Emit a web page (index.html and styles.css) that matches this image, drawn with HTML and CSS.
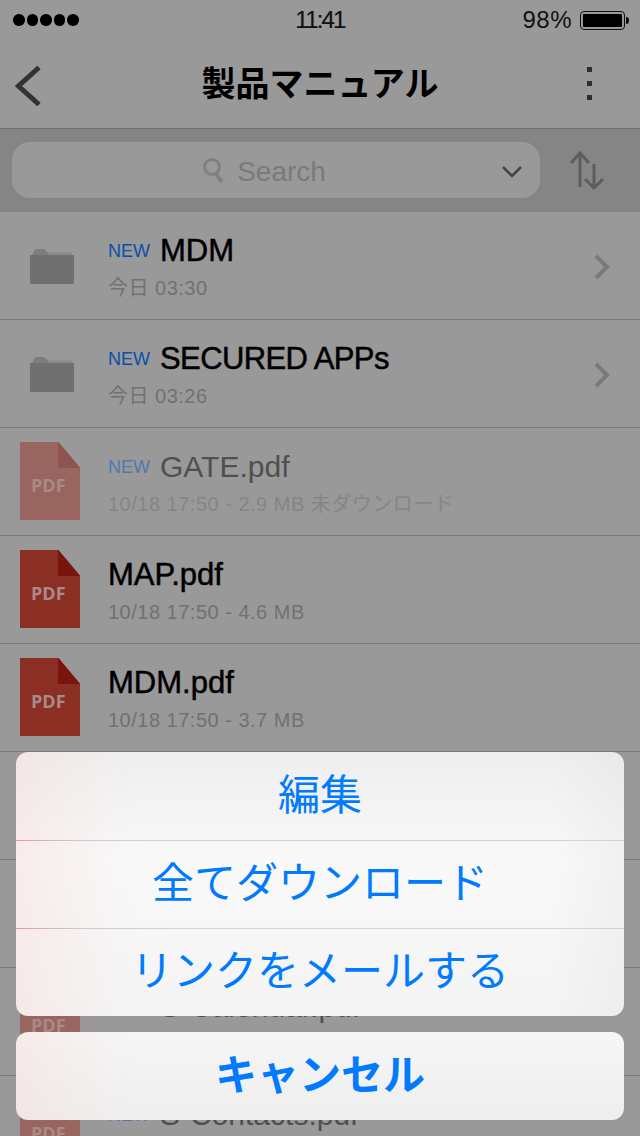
FILE: index.html
```html
<!DOCTYPE html>
<html lang="ja">
<head>
    <meta charset="UTF-8">
    <meta name="viewport" content="width=device-width, initial-scale=1.0">
    <title>製品マニュアル</title>
    <link rel="stylesheet" href="styles.css">
</head>
<body>
    <div class="status-bar">
        <div class="signal"><i></i><i></i><i></i><i></i><i></i></div>
        <div class="clock">11:41</div>
        <div class="power">
            <span class="percent">98%</span>
            <span class="battery"><span class="battery-fill"></span></span>
            <span class="battery-nub"></span>
        </div>
    </div>

    <header class="nav-bar">
        <svg class="back-icon" width="26" height="40" viewBox="0 0 26 40"><path d="M24 1.500 L3.500 20 L24 38.500" fill="none" stroke="#333" stroke-width="5"/></svg>
        <h1 class="nav-title">製品マニュアル</h1>
        <div class="kebab"><i></i><i></i><i></i></div>
    </header>

    <div class="search-strip">
        <div class="search-field">
            <svg class="search-icon" width="22" height="26" viewBox="0 0 22 26"><circle cx="10" cy="10" r="7.500" fill="none" stroke="#808080" stroke-width="3"/><path d="M14 17 L20 25" stroke="#808080" stroke-width="4"/></svg>
            <span class="search-text">Search</span>
            <svg class="search-caret" width="20" height="12" viewBox="0 0 20 12"><path d="M1 1 L10 10 L19 1" fill="none" stroke="#444" stroke-width="2.500"/></svg>
        </div>
        <svg class="sort-icon" width="36" height="40" viewBox="0 0 36 40"><path d="M11 37 V3 M2 13 L11 3 L20 13 M25 14 V38 M16 29 L25 38 L34 29" fill="none" stroke="#5d5d5d" stroke-width="3"/></svg>
    </div>

    <ul class="file-list">
        <li class="row">
            <div class="thumb"><div class="folder"><span class="folder-tab"></span><span class="folder-body"></span></div></div>
            <div class="info">
                <div class="name-line"><span class="new-tag">NEW</span><span class="name">MDM</span></div>
                <div class="meta">今日 03:30</div>
            </div>
            <svg class="row-arrow" width="18" height="26" viewBox="0 0 18 26"><path d="M3 2 L14 13 L3 24" fill="none" stroke="#7a7a7a" stroke-width="4"/></svg>
        </li>
        <li class="row">
            <div class="thumb"><div class="folder"><span class="folder-tab"></span><span class="folder-body"></span></div></div>
            <div class="info">
                <div class="name-line"><span class="new-tag">NEW</span><span class="name name-tight">SECURED APPs</span></div>
                <div class="meta">今日 03:26</div>
            </div>
            <svg class="row-arrow" width="18" height="26" viewBox="0 0 18 26"><path d="M3 2 L14 13 L3 24" fill="none" stroke="#7a7a7a" stroke-width="4"/></svg>
        </li>
        <li class="row remote">
            <div class="thumb"><div class="pdf"><span class="pdf-fold"></span><span class="pdf-label">PDF</span></div></div>
            <div class="info">
                <div class="name-line"><span class="new-tag">NEW</span><span class="name">GATE.pdf</span></div>
                <div class="meta">10/18 17:50 - 2.9 MB 未ダウンロード</div>
            </div>
        </li>
        <li class="row">
            <div class="thumb"><div class="pdf"><span class="pdf-fold"></span><span class="pdf-label">PDF</span></div></div>
            <div class="info">
                <div class="name-line"><span class="name">MAP.pdf</span></div>
                <div class="meta">10/18 17:50 - 4.6 MB</div>
            </div>
        </li>
        <li class="row">
            <div class="thumb"><div class="pdf"><span class="pdf-fold"></span><span class="pdf-label">PDF</span></div></div>
            <div class="info">
                <div class="name-line"><span class="name">MDM.pdf</span></div>
                <div class="meta">10/18 17:50 - 3.7 MB</div>
            </div>
        </li>
        <li class="row remote"></li>
        <li class="row remote"></li>
        <li class="row remote">
            <div class="thumb"><div class="pdf"><span class="pdf-fold"></span><span class="pdf-label">PDF</span></div></div>
            <div class="info">
                <div class="name-line"><span class="new-tag">NEW</span><span class="name">S-Calendar.pdf</span></div>
            </div>
        </li>
        <li class="row remote">
            <div class="thumb"><div class="pdf"><span class="pdf-fold"></span><span class="pdf-label">PDF</span></div></div>
            <div class="info">
                <div class="name-line"><span class="new-tag">NEW</span><span class="name">S-Contacts.pdf</span></div>
            </div>
        </li>
    </ul>

    <div class="action-sheet">
        <div class="sheet-group">
            <button class="sheet-btn">編集</button>
            <button class="sheet-btn">全てダウンロード</button>
            <button class="sheet-btn">リンクをメールする</button>
        </div>
        <div class="sheet-group cancel-group">
            <button class="sheet-btn cancel-btn">キャンセル</button>
        </div>
    </div>
</body>
</html>
```

FILE: styles.css
```css
* {
    margin: 0;
    padding: 0;
    box-sizing: border-box;
}

body {
    width: 640px;
    height: 1136px;
    background: #999;
    font-family: "Liberation Sans", "Noto Sans CJK JP", sans-serif;
    overflow: hidden;
    position: relative;
}

/* status bar */
.status-bar {
    height: 40px;
    padding: 0 11px 0 13px;
    display: flex;
    align-items: center;
    justify-content: space-between;
    position: relative;
    color: #111;
}

.signal {
    display: flex;
    gap: 2px;
}

.signal i {
    width: 11.500px;
    height: 11.500px;
    border-radius: 50%;
    background: #000;
}

.clock {
    position: absolute;
    left: 0;
    right: 0;
    text-align: center;
    font-size: 24px;
    letter-spacing: -1.8px;
    -webkit-text-stroke: 0.2px #111;
}

.power {
    display: flex;
    align-items: center;
}

.percent {
    font-size: 24px;
    letter-spacing: 0.5px;
    margin-right: 8px;
}

.battery {
    width: 45px;
    height: 19px;
    border: 1px solid #111;
    border-radius: 4px;
    padding: 2px;
    display: block;
}

.battery-fill {
    display: block;
    height: 100%;
    background: #000;
    border-radius: 1px;
}

.battery-nub {
    width: 3px;
    height: 7px;
    margin-left: 1px;
    background: #111;
    border-radius: 0 3px 3px 0;
}

/* nav */
.nav-bar {
    height: 89px;
    padding-bottom: 5px;
    display: flex;
    align-items: center;
    justify-content: space-between;
    border-bottom: 1px solid #6e6e6e;
    position: relative;
}

.back-icon {
    margin: 8px 0 0 15px;
}

.nav-title {
    position: absolute;
    left: 0;
    right: 0;
    text-align: center;
    font-size: 34px;
    font-weight: 700;
    color: #000;
}

.kebab {
    display: flex;
    flex-direction: column;
    gap: 9px;
    margin: 4px 48px 0 0;
}

.kebab i {
    width: 5px;
    height: 5px;
    background: #2e2e2e;
}

/* search */
.search-strip {
    height: 83px;
    padding: 13px 0 0 12px;
    background: #858585;
    display: flex;
    align-items: flex-start;
}

.search-field {
    width: 528px;
    height: 56px;
    padding-right: 24px;
    background: #999;
    border-radius: 18px;
    display: flex;
    align-items: center;
    justify-content: center;
    position: relative;
}

.search-icon {
    margin: 0 13px 0 0;
}

.search-text {
    font-size: 28px;
    color: #7a7a7a;
    margin-top: 4px;
}

.search-caret {
    position: absolute;
    right: 18px;
    top: 24px;
}

.sort-icon {
    margin: 8px 0 0 29px;
}

/* list */
.file-list {
    list-style: none;
}

.row {
    height: 108px;
    border-bottom: 1px solid #7d7d7d;
    display: flex;
    align-items: flex-start;
    position: relative;
}

.thumb {
    width: 108px;
    flex-shrink: 0;
    padding: 14px 0 0 20px;
}

.folder {
    width: 44px;
    margin: 23px 0 0 10px;
}

.folder-tab {
    display: block;
    height: 6px;
    margin: 0 2px;
    background: linear-gradient(to right, #7d7d7d 40%, #8a8a8a 40%);
    clip-path: polygon(8% 0, 30% 0, 40% 60%, 100% 60%, 100% 100%, 0 100%);
}

.folder-body {
    display: block;
    height: 29px;
    background: #707070;
}

.pdf {
    width: 60px;
    height: 78px;
    background: #8b2e24;
    clip-path: polygon(0 0, 64% 0, 100% 33%, 100% 100%, 0 100%);
    position: relative;
}

.pdf-fold {
    position: absolute;
    left: 38px;
    top: 0;
    width: 22px;
    height: 26px;
    background: #7a150d;
}

.pdf-label {
    position: absolute;
    left: 11px;
    top: 33px;
    font-family: "Open Sans", "Liberation Sans", sans-serif;
    font-size: 18px;
    line-height: 20px;
    font-weight: 700;
    color: #aa8a86;
}

.info {
    flex: 1;
    padding-top: 19px;
}

.name-line {
    display: flex;
    align-items: center;
    height: 40px;
    line-height: 40px;
}

.new-tag {
    font-size: 18px;
    width: 52px;
    color: #0a50a8;
}

.name {
    font-size: 31px;
    color: #000;
    -webkit-text-stroke: 0.5px #000;
}

.name-tight {
    letter-spacing: -0.6px;
}

.meta {
    font-size: 20px;
    letter-spacing: 0.5px;
    line-height: 28px;
    margin-top: 3px;
    color: #717171;
}

.row-arrow {
    position: absolute;
    right: 29px;
    top: 42px;
}

/* not downloaded yet */
.remote .pdf {
    background: #996560;
}

.remote .pdf-fold {
    background: #8f5450;
}

.remote .new-tag {
    color: #4f79ad;
}

.remote .name {
    font-size: 30px;
    color: #4f4f4f;
    -webkit-text-stroke: 0;
}

.remote .meta {
    color: #858585;
}

/* action sheet */
.action-sheet {
    position: absolute;
    left: 16px;
    right: 16px;
    top: 752px;
    display: flex;
    flex-direction: column;
    gap: 16px;
}

.sheet-group {
    border-radius: 12px;
    overflow: hidden;
    background:
        linear-gradient(to right, rgba(248, 215, 215, 0.4), rgba(248, 225, 225, 0.2) 70px, rgba(255, 255, 255, 0) 120px),
        linear-gradient(to right, rgba(255, 255, 255, 0) 88%, rgba(225, 225, 225, 0.35)),
        linear-gradient(to bottom, #eeeeee, #f9f9f9 40%, #f4f4f4);
}

.cancel-group {
    background:
        linear-gradient(to right, rgba(248, 215, 215, 0.4), rgba(248, 225, 225, 0.2) 70px, rgba(255, 255, 255, 0) 120px),
        linear-gradient(to bottom, #f6f6f6, #eeeeee);
}

.sheet-btn {
    display: block;
    width: 100%;
    height: 88px;
    padding-bottom: 10px;
    border: none;
    background: none;
    font-family: "Liberation Sans", "Noto Sans CJK JP", sans-serif;
    font-size: 42px;
    color: #007aff;
}

.sheet-btn + .sheet-btn {
    border-top: 1px solid;
    border-image: linear-gradient(to right, #d9a0a0, #d3c4c8 60px, #d2d2da 150px) 1;
}

.cancel-btn {
    font-weight: 700;
}
```
